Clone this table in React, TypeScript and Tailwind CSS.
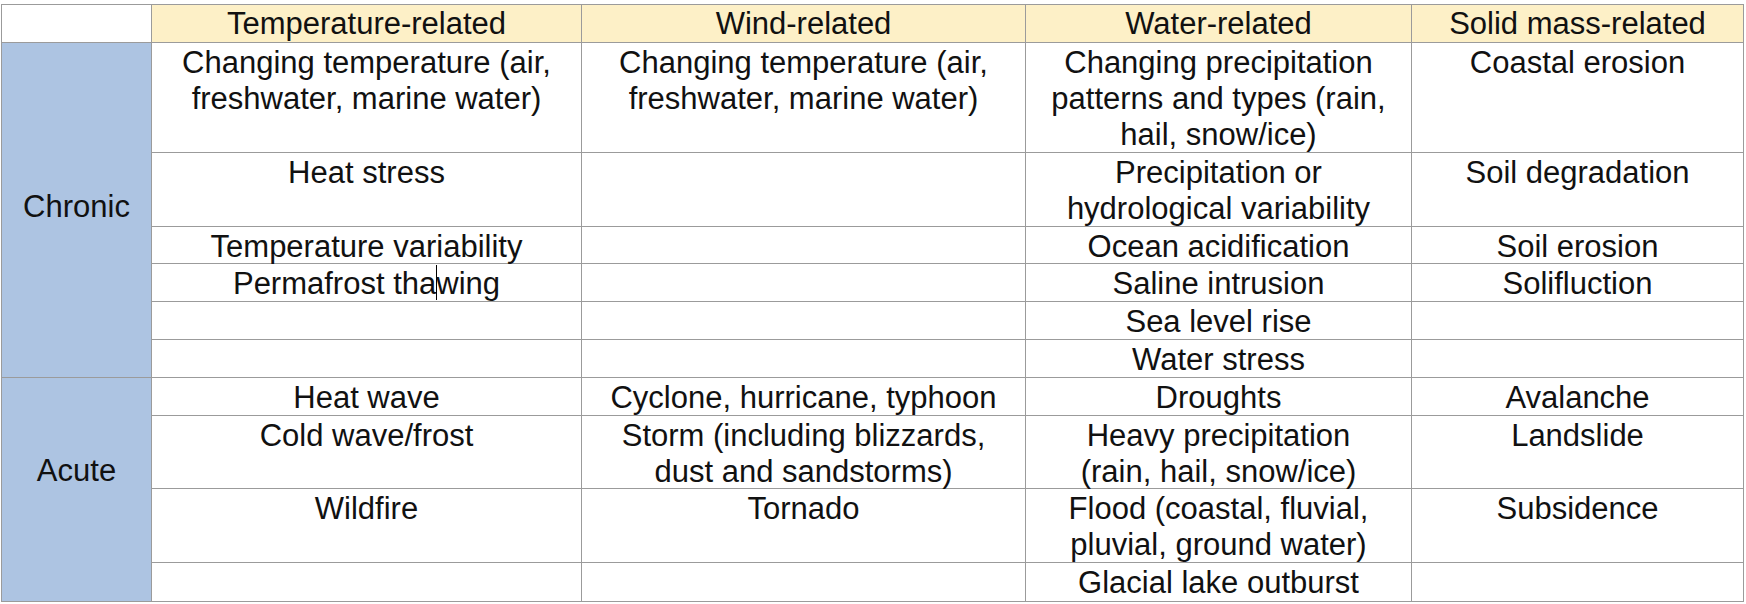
const headers = ['Temperature-related', 'Wind-related', 'Water-related', 'Solid mass-related'];

// Each group: label + rows of four cells (temperature, wind, water, solid mass)
const groups: { label: string; pad: string; span: string; rows: string[][] }[] = [
  {
    label: 'Chronic',
    pad: 'pb-[7px]',
    span: 'row-span-6',
    rows: [
      [
        'Changing temperature (air,\nfreshwater, marine water)',
        'Changing temperature (air,\nfreshwater, marine water)',
        'Changing precipitation\npatterns and types (rain,\nhail, snow/ice)',
        'Coastal erosion',
      ],
      ['Heat stress', '', 'Precipitation or\nhydrological variability', 'Soil degradation'],
      ['Temperature variability', '', 'Ocean acidification', 'Soil erosion'],
      ['__thawing__', '', 'Saline intrusion', 'Solifluction'],
      ['', '', 'Sea level rise', ''],
      ['', '', 'Water stress', ''],
    ],
  },
  {
    label: 'Acute',
    pad: 'pb-[38px]',
    span: 'row-span-4',
    rows: [
      ['Heat wave', 'Cyclone, hurricane, typhoon', 'Droughts', 'Avalanche'],
      [
        'Cold wave/frost',
        'Storm (including blizzards,\ndust and sandstorms)',
        'Heavy precipitation\n(rain, hail, snow/ice)',
        'Landslide',
      ],
      ['Wildfire', 'Tornado', 'Flood (coastal, fluvial,\npluvial, ground water)', 'Subsidence'],
      ['', '', 'Glacial lake outburst', ''],
    ],
  },
];

const Cell = ({ text }: { text: string }) => (
  <div className="bg-white pt-[2px] text-center whitespace-pre-line">
    {text === '__thawing__' ? (
      <>
        Permafrost tha
        <span className="inline-block w-px h-[35px] -mr-px -mt-px bg-black align-top" />
        wing
      </>
    ) : (
      text
    )}
  </div>
);

export default function App() {
  return (
    <div
      className="h-[604px] w-[1746px] bg-white pt-[4px] pl-px text-[31px] leading-[36px] text-[#111]"
      style={{ fontFamily: '"Liberation Sans", Arial, sans-serif' }}
    >
      <div className="grid w-fit grid-cols-[149px_429px_443px_385px_331px] grid-rows-[37px_109px_73px_36px_37px_37px_37px_37px_72px_73px_38px] gap-px bg-[#9b9b9b] p-px">
        <div className="bg-white" />
        {headers.map((h) => (
          <div key={h} className="bg-[#fdf0c7] pt-px text-center">
            {h}
          </div>
        ))}

        {groups.map((g) => (
          <div key={g.label} className="contents">
            <div className={`${g.span} ${g.pad} flex items-center justify-center bg-[#adc4e2]`}>
              {g.label}
            </div>
            {g.rows.map((row, ri) =>
              row.map((c, ci) => <Cell key={`${g.label}-${ri}-${ci}`} text={c} />)
            )}
          </div>
        ))}
      </div>
    </div>
  );
}
